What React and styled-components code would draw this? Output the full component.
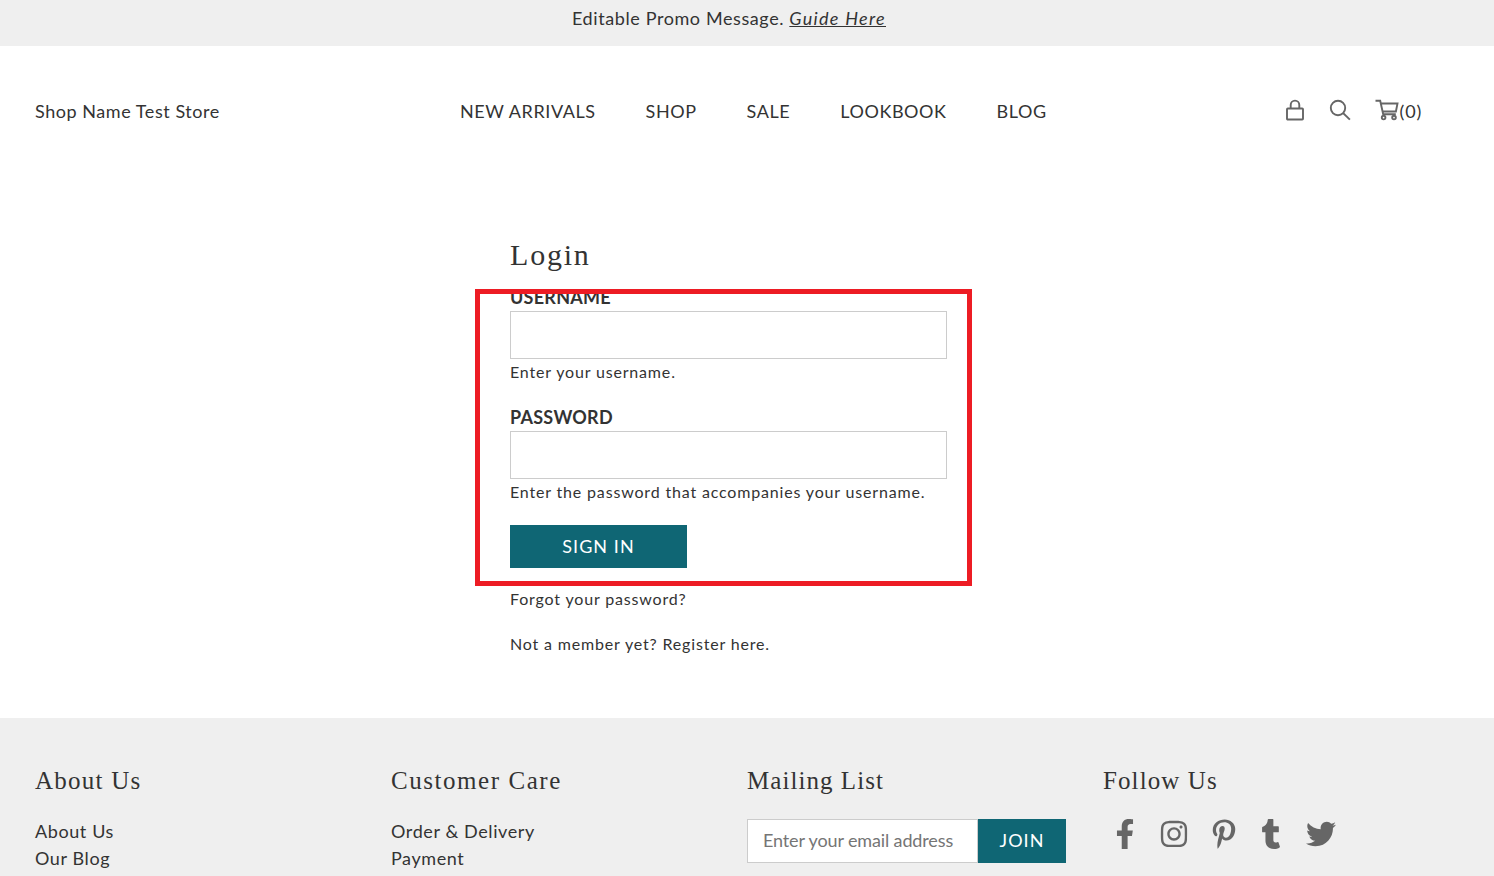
import React from "react";
import styled, { createGlobalStyle } from "styled-components";
import { FaFacebookF, FaInstagram, FaPinterestP, FaTumblr, FaTwitter } from "react-icons/fa";

const GlobalStyle = createGlobalStyle`
  *, *::before, *::after { box-sizing: border-box; }
  html, body { margin: 0; padding: 0; }
  body {
    background: #fff;
    color: #333;
    font: 400 18px/27px Lato, "Liberation Sans", sans-serif;
    letter-spacing: 0.6px;
    overflow: hidden;
  }
  a { color: inherit; text-decoration: none; }
`;

const Page = styled.div`
  height: 876px;
  display: flex;
  flex-direction: column;
  overflow: hidden;
`;

const PromoBar = styled.div`
  flex: none;
  height: 46px;
  padding: 5px 36px 0 0;
  background: #efefef;
  text-align: center;
`;

const GuideLink = styled.a`
  font-style: italic;
  letter-spacing: 1.3px;
  && { text-decoration: underline; }
  text-decoration-thickness: 1px;
`;

const Header = styled.header`
  flex: none;
  display: grid;
  grid-template-columns: 425px 1fr auto;
  align-items: center;
  height: 132px;
  padding: 0 72px 2px 35px;
`;

const Brand = styled.a`
  letter-spacing: 0.55px;
`;

const Nav = styled.nav`
  display: flex;
  gap: 50px;
  letter-spacing: 0.57px;
`;

const Tools = styled.div`
  display: flex;
  align-items: center;
  letter-spacing: 0.8px;
`;

const ToolLink = styled.a`
  display: flex;
  align-items: center;
  margin-right: ${(p) => p.$gap || 0}px;

  svg {
    display: block;
    fill: none;
    stroke: #666;
    stroke-width: 1.9;
    margin-top: -2px;
  }
`;

const CartCount = styled.span`
  margin-left: 1px;
`;

const Main = styled.main`
  flex: none;
  width: 437px;
  height: 540px;
  margin-left: 510px;
  padding-top: 57px;
`;

const Title = styled.h1`
  margin: 0;
  height: 49px;
  font: 400 30px/40px "Liberation Serif", serif;
  letter-spacing: 1.8px;
`;

const Form = styled.form`
  position: relative;
  margin-bottom: 17px;
`;

const Highlight = styled.div`
  position: absolute;
  left: -35px;
  top: 5px;
  width: 497px;
  height: 297px;
  border: 5px solid #ed1c24;
  pointer-events: none;
`;

const Field = styled.div`
  margin-bottom: ${(p) => p.$gap}px;
`;

const Label = styled.label`
  display: block;
  font-weight: 700;
  letter-spacing: 0.25px;
`;

const Input = styled.input`
  display: block;
  width: 100%;
  height: 48px;
  border: 1px solid #ccc;
  background: #fff;
`;

const Small = styled.p`
  margin: 0 0 ${(p) => p.$gap || 0}px;
  font-size: 16px;
  line-height: 27px;
  letter-spacing: 0.83px;
`;

const Hint = styled(Small)`
  height: 27px;
  line-height: 25px;
`;

const Button = styled.button`
  display: block;
  width: ${(p) => p.$width}px;
  height: ${(p) => p.$height}px;
  padding: 0 0 ${(p) => p.$lift || 0}px;
  border: 0;
  background: #0f6674;
  color: #fff;
  font: 400 18px/27px Lato, sans-serif;
  letter-spacing: 1.05px;
`;

const Footer = styled.footer`
  flex: 1;
  display: grid;
  grid-template-columns: repeat(4, 356px);
  padding: 43px 35px 0;
  background: #efefef;
`;

const FooterTitle = styled.h2`
  margin: 0 0 18px;
  font: 400 25px/40px "Liberation Serif", serif;
  letter-spacing: ${(p) => p.$tracking}px;
`;

const FooterLinks = styled.div`
  margin-top: -1px;
`;

const FooterLink = styled.a`
  display: block;
`;

const Subscribe = styled.form`
  display: flex;
`;

const EmailInput = styled.input`
  width: 231px;
  height: 44px;
  padding: 0 15px 2px;
  border: 1px solid #ccc;
  background: #fff;
  font: 400 18px Lato, sans-serif;
  letter-spacing: -0.13px;

  &::placeholder { color: #757575; opacity: 1; }
`;

const Social = styled.div`
  display: flex;
  align-items: center;
  height: 30px;
  padding-left: 12px;
  color: #666;
`;

const SocialLink = styled.a`
  display: flex;
  justify-content: center;
  width: ${(p) => p.$width}px;
  margin-right: ${(p) => p.$gap || 0}px;

  svg { flex: none; }
`;

const LockIcon = () => (
  <svg width="20" height="22" viewBox="0 0 20 22">
    <rect x="2" y="9.5" width="16" height="11" rx="0.8" />
    <path d="M5.7 9.5V6a4.3 4.4 0 0 1 8.6 0v3.5" />
  </svg>
);

const SearchIcon = () => (
  <svg width="22" height="22" viewBox="0 0 22 22">
    <circle cx="9" cy="9" r="7.2" />
    <path d="M14 14l6.9 6.6" />
  </svg>
);

const CartIcon = () => (
  <svg width="24" height="22" viewBox="0 0 24 22">
    <path d="M0.5 1.8h4.7l3 13.4h12.6M5.7 4.5h16.8l-1.6 8H7.5" />
    <circle cx="8.6" cy="18.6" r="1.8" />
    <circle cx="19" cy="18.6" r="1.8" />
  </svg>
);

const NAV = ["NEW ARRIVALS", "SHOP", "SALE", "LOOKBOOK", "BLOG"];

export default function App() {
  return (
    <Page>
      <GlobalStyle />
      <PromoBar>
        Editable Promo Message. <GuideLink href="#">Guide Here</GuideLink>
      </PromoBar>
      <Header>
        <Brand href="#">Shop Name Test Store</Brand>
        <Nav>
          {NAV.map((item) => (
            <a href="#" key={item}>{item}</a>
          ))}
        </Nav>
        <Tools>
          <ToolLink href="#" $gap={24} aria-label="Account"><LockIcon /></ToolLink>
          <ToolLink href="#" $gap={24} aria-label="Search"><SearchIcon /></ToolLink>
          <ToolLink href="#"><CartIcon /><CartCount>(0)</CartCount></ToolLink>
        </Tools>
      </Header>
      <Main>
        <Title>Login</Title>
        <Form>
          <Field $gap={18}>
            <Label htmlFor="username">USERNAME</Label>
            <Input id="username" />
            <Hint>Enter your username.</Hint>
          </Field>
          <Field $gap={19}>
            <Label htmlFor="password">PASSWORD</Label>
            <Input id="password" type="password" />
            <Hint>Enter the password that accompanies your username.</Hint>
          </Field>
          <Button type="button" $width={177} $height={43}>SIGN IN</Button>
          <Highlight />
        </Form>
        <Small $gap={18}><a href="#">Forgot your password?</a></Small>
        <Small>Not a member yet? <a href="#">Register here.</a></Small>
      </Main>
      <Footer>
        <div>
          <FooterTitle $tracking={1.25}>About Us</FooterTitle>
          <FooterLinks>
            <FooterLink href="#">About Us</FooterLink>
            <FooterLink href="#">Our Blog</FooterLink>
          </FooterLinks>
        </div>
        <div>
          <FooterTitle $tracking={1.55}>Customer Care</FooterTitle>
          <FooterLinks>
            <FooterLink href="#">Order &amp; Delivery</FooterLink>
            <FooterLink href="#">Payment</FooterLink>
          </FooterLinks>
        </div>
        <div>
          <FooterTitle $tracking={1.05}>Mailing List</FooterTitle>
          <Subscribe>
            <EmailInput placeholder="Enter your email address" />
            <Button type="button" $width={88} $height={44} $lift={2}>JOIN</Button>
          </Subscribe>
        </div>
        <div>
          <FooterTitle $tracking={1.1}>Follow Us</FooterTitle>
          <Social>
            <SocialLink href="#" $width={20} $gap={24} aria-label="Facebook"><FaFacebookF size={30} /></SocialLink>
            <SocialLink href="#" $width={30} $gap={23} aria-label="Instagram"><FaInstagram size={30} /></SocialLink>
            <SocialLink href="#" $width={23} $gap={26} aria-label="Pinterest"><FaPinterestP size={30} /></SocialLink>
            <SocialLink href="#" $width={19} $gap={26} aria-label="Tumblr"><FaTumblr size={30} /></SocialLink>
            <SocialLink href="#" $width={30} aria-label="Twitter"><FaTwitter size={30} /></SocialLink>
          </Social>
        </div>
      </Footer>
    </Page>
  );
}
